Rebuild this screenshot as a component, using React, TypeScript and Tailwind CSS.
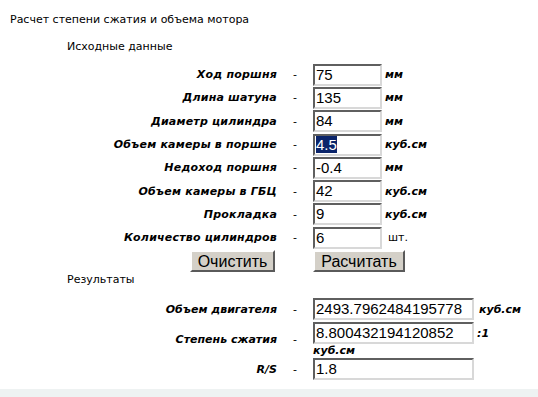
import React from 'react';

const inputRows = [
  { label: 'Ход поршня', value: '75', unit: 'мм' },
  { label: 'Длина шатуна', value: '135', unit: 'мм' },
  { label: 'Диаметр цилиндра', value: '84', unit: 'мм' },
  { label: 'Объем камеры в поршне', value: '4.5', unit: 'куб.см', selected: true },
  { label: 'Недоход поршня', value: '-0.4', unit: 'мм' },
  { label: 'Объем камеры в ГБЦ', value: '42', unit: 'куб.см' },
  { label: 'Прокладка', value: '9', unit: 'куб.см' },
  { label: 'Количество цилиндров', value: '6', unit: 'шт.', plain: true },
];

function Field({ value, wide, selected }: { value: string; wide?: boolean; selected?: boolean }) {
  return (
    <div
      className={`${wide ? 'w-[161px]' : 'w-[69px]'} h-[22px] bg-white border-2 border-t-[#5f5f5f] border-l-[#5f5f5f] border-r-[#d8d8d8] border-b-[#d8d8d8] pl-[1px] text-[15px] leading-[18px] text-black font-['Liberation_Sans',Arial,sans-serif] whitespace-nowrap overflow-hidden`}
    >
      {selected ? <span className="bg-[#0a246a] text-white">{value}</span> : value}
    </div>
  );
}

function Btn({ children, w }: { children: React.ReactNode; w: string }) {
  return (
    <div
      className={`${w} h-[22px] bg-[#d4d0c8] border-2 border-t-white border-l-white border-r-[#5a5a5a] border-b-[#5a5a5a] flex items-center justify-center text-[16px] text-black font-['Liberation_Sans',Arial,sans-serif]`}
    >
      {children}
    </div>
  );
}

export default function App() {
  return (
    <div className="h-[397px] w-[538px] bg-white flex flex-col text-[11px] leading-[13px] text-black font-['DejaVu_Sans',Verdana,sans-serif]">
      <div className="pl-[10px] pt-[13px]">Расчет степени сжатия и объема мотора</div>
      <div className="pl-[67px] mt-[14px]">Исходные данные</div>

      <div className="mt-[10px] grid grid-cols-[277px_36px_69px_auto] auto-rows-[23.3px] items-center">
        {inputRows.map((r) => (
          <React.Fragment key={r.label}>
            <div className="text-right font-bold italic tracking-[0.2px]">{r.label}</div>
            <div className="text-center">-</div>
            <Field value={r.value} selected={r.selected} />
            <div className={r.plain ? 'pl-[6px]' : 'pl-[3px] font-bold italic'}>{r.unit}</div>
          </React.Fragment>
        ))}
        <div className="flex justify-end pr-[2px]">
          <Btn w="w-[85px]">Очистить</Btn>
        </div>
        <div />
        <div className="col-span-2">
          <Btn w="w-[92px]">Расчитать</Btn>
        </div>
      </div>

      <div className="pl-[67px]">Результаты</div>

      <div className="mt-[12px] grid grid-cols-[277px_36px_161px_auto] items-center">
        <div className="h-[23px] flex items-center justify-end font-bold italic">Объем двигателя</div>
        <div className="text-center">-</div>
        <Field value="2493.7962484195778" wide />
        <div className="pl-[5px] font-bold italic">куб.см</div>

        <div className="h-[37px] flex items-center justify-end font-bold italic pt-[1px]">Степень сжатия</div>
        <div className="text-center pt-[1px]">-</div>
        <div className="flex flex-col pt-[1px]">
          <Field value="8.800432194120852" wide />
          <div className="font-bold italic">куб.см</div>
        </div>
        <div className="self-start pt-[6px] pl-[3px] font-bold italic">:1</div>

        <div className="h-[23px] flex items-center justify-end font-bold italic">R/S</div>
        <div className="text-center">-</div>
        <Field value="1.8" wide />
        <div />
      </div>

      <div className="mt-auto h-[8px] bg-[#eef2f2]" />
    </div>
  );
}
